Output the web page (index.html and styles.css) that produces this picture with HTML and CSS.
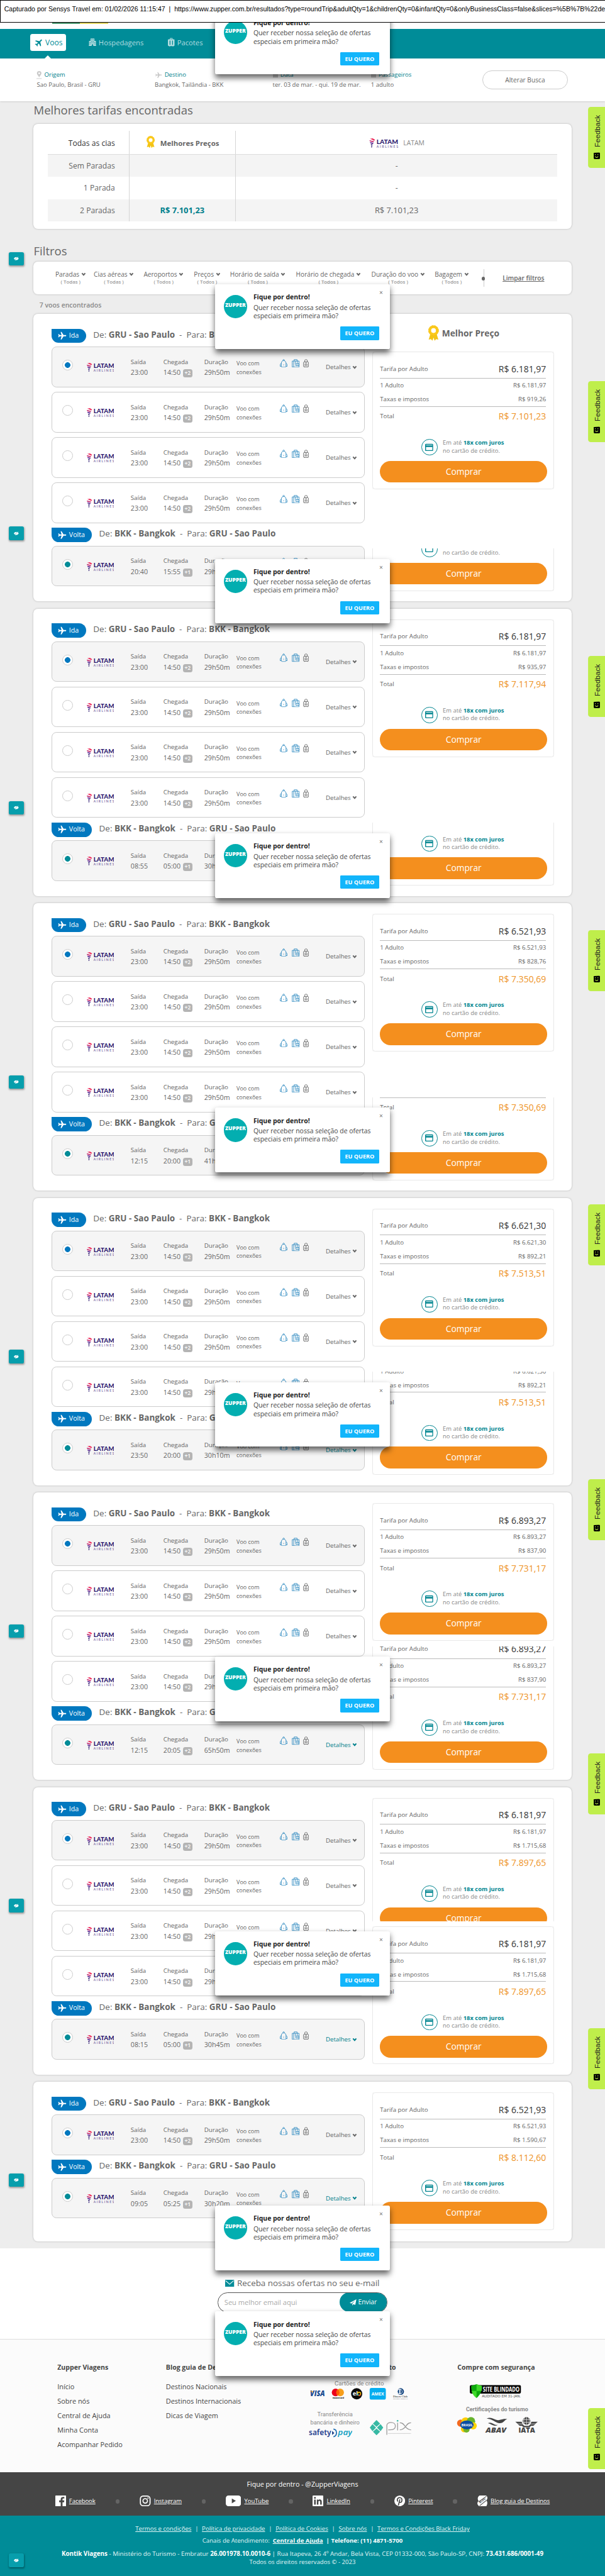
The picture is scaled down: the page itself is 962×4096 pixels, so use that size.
FILE: index.html
```html
<!DOCTYPE html>
<html lang="pt-BR">
  <head>
    <meta charset="utf-8">
    <title>Zupper Viagens - Resultados</title>
    <link rel="stylesheet" href="styles.css">
  </head>
  <body>
    <!-- Icon sprite -->
    <svg class="sprite">
      <symbol id="plane" viewBox="0 0 24 24"><path fill="currentColor" d="M22 10.3h-6L10.4 1.5H7.8l2.6 8.8H5.2L3 7.6H1l1.3 4.4L1 16.4h2l2.2-2.7h5.2l-2.6 8.8h2.6l5.6-8.8h6c2.600 0 2.600-3.400 0-3.400z"/></symbol>
      <symbol id="hotel" viewBox="0 0 20 20"><path fill="currentColor" fill-rule="evenodd" d="M5 0h10v6h4v12h1v2h-8v-5H8v5H0v-2h1V6h4zM7 2v2h2V2zm4 0v2h2V2zM7 6v2h2V6zm4 0v2h2V6zM3 9v2h2V9zm4 1v2h2v-2zm4 0v2h2v-2zm4-1v2h2V9zM3 13v2h2v-2zm12 0v2h2v-2z"/></symbol>
      <symbol id="suitcase" viewBox="0 0 16 20"><path fill="currentColor" fill-rule="evenodd" d="M5 0h6v3h3a2 2 0 0 1 2 2v12a2 2 0 0 1-2 2h-1v1h-2v-1H5v1H3v-1H2a2 2 0 0 1-2-2V5a2 2 0 0 1 2-2h3zm1.500 1.500V3h3V1.500zM4 6v10h2V6zm6 0v10h2V6z"/></symbol>
      <symbol id="pin" viewBox="0 0 12 18"><path fill="currentColor" fill-rule="evenodd" d="M6 0a5 5 0 0 1 5 5c0 3-3 5-5 9-2-4-5-6-5-9a5 5 0 0 1 5-5zm0 3a2 2 0 1 0 0 4 2 2 0 0 0 0-4zM0 16h12v1.500H0z"/></symbol>
      <symbol id="box" viewBox="0 0 12 12"><path fill="currentColor" d="M1 2h2V0h2v2h2V0h2v2h2a1 1 0 0 1 1 1v9H0V3a1 1 0 0 1 1-1z"/></symbol>
      <symbol id="ribbon" viewBox="0 0 24 30"><path fill="#f3c416" d="M6 17L3 27l4-1 3 3 2-6 2 6 3-3 4 1-3-10z"/><circle cx="12" cy="10" r="7" fill="#fff" stroke="#fbc91b" stroke-width="5"/><circle cx="12" cy="10" r="9.300" fill="none" stroke="#f3bc10" stroke-width="1" stroke-dasharray="3 2"/></symbol>
      <symbol id="latam" viewBox="0 0 61 20">
        <path fill="#ee2a5a" d="M1 1l6-1 5 3-2 2-6-3z"/><path fill="#c3226b" d="M0 4l10 2.500-1.500 2L1 6.500z"/><path fill="#5a2a92" d="M1 8l8 1.800-2 2.400-5-1.700z"/><path fill="#2d1a70" d="M3 12.500l4 .8-1.500 2-2.200-.6zM4 16l2 .4-.8 3.200H4z"/>
        <text x="15" y="11.800" class="latam-name" textLength="46" lengthAdjust="spacingAndGlyphs">LATAM</text>
        <text x="15" y="19.600" class="latam-sub" textLength="46">AIRLINES</text>
      </symbol>
      <symbol id="chevron" viewBox="0 0 12 12"><path fill="none" stroke="currentColor" stroke-width="3" d="M2 3.500l4 4.500 4-4.500"/></symbol>
      <symbol id="backpack" viewBox="0 0 18 20"><g fill="none" stroke="currentColor" stroke-width="1.200"><path d="M3.500 17V9.500C3.500 6.500 5.500 3.500 9 3.500s5.500 3 5.500 6V17c0 1.500-.8 2-2 2h-7c-1.200 0-2-.5-2-2zM7 3.500C6.500 0 11.500 0 11 3.500M3.500 10C.5 11 .6 13 .8 17h2.700M14.500 10c3 1 2.900 3 2.700 7h-2.700M8 13.500h2"/></g></symbol>
      <symbol id="handbag" viewBox="0 0 18 20"><g fill="none" stroke="currentColor" stroke-width="1.200"><path d="M1 4.500h16V19H1zM5.500 4.500V1.200h7v3.300M4.500 4.500V19M8.500 4.500V11M13 10V4.500M9.500 11H17v4.500H9.500zM12 13.200h1.500"/></g></symbol>
      <symbol id="checked-bag" viewBox="0 0 14 20"><g fill="none" stroke="currentColor" stroke-width="1.200"><rect x="1" y="6.500" width="12" height="12" rx="2"/><path d="M4 6.500V2.500C4 .5 10 .5 10 2.500v4M4.500 11v5M7 11v5M9.500 11v5M5 9h4M3 18.500V20M11 18.500V20"/></g></symbol>
      <symbol id="card" viewBox="0 0 18 18"><path fill="currentColor" fill-rule="evenodd" d="M2 1h14a2 2 0 0 1 2 2v12a2 2 0 0 1-2 2H2a2 2 0 0 1-2-2V3a2 2 0 0 1 2-2zm0 2v1.500h14V3zm0 5v7h14V8z"/></symbol>
      <symbol id="eye-off" viewBox="0 0 12 10"><path fill="currentColor" d="M0 5c3-5 9-5 12 0-3 5-9 5-12 0z"/><path stroke="#079eac" stroke-width="1" d="M1.500 9.500l8-9.500"/><path stroke="currentColor" stroke-width="1" d="M2.500 10l8-9.500"/></symbol>
      <symbol id="smile" viewBox="0 0 16 16"><path d="M1 1l12-1c2 0 3 1 3 3v10c0 2-1 3-3 3H4c-2 0-3-1-3-3z"/><path fill="none" stroke="#bfee4b" stroke-width="1.600" d="M5 4v2.500M11 4v2.500M4.500 9.500c1 3.500 6 3.500 7 0"/></symbol>
    </svg>

    <div class="page">
      <div class="capture-bar">Capturado por Sensys Travel em: 01/02/2026 11:15:47 &nbsp;|&nbsp; https://www.zupper.com.br/resultados?type=roundTrip&amp;adultQty=1&amp;childrenQty=0&amp;infantQty=0&amp;onlyBusinessClass=false&amp;slices=%5B%7B%22de</div>
      <div class="logo-strip"><span class="logo-line"></span></div>

      <nav class="navbar">
        <a class="tab active"><svg width="19" height="19"><use href="#plane"/></svg>Voos</a>
        <a class="tab hotels"><svg width="17" height="18"><use href="#hotel"/></svg>Hospedagens</a>
        <a class="tab packs"><svg width="15" height="20"><use href="#suitcase"/></svg>Pacotes</a>
      </nav>

      <div class="search">
        <div class="field"><div class="name"><svg width="12" height="18"><use href="#pin"/></svg>Origem</div>Sao Paulo, Brasil - GRU</div>
        <div class="field"><div class="name"><svg width="17" height="15"><use href="#plane"/></svg>Destino</div>Bangkok, Tailândia - BKK</div>
        <div class="field"><div class="name"><svg width="12" height="12"><use href="#box"/></svg>Data</div>ter. 03 de mar. - qui. 19 de mar.</div>
        <div class="field"><div class="name"><svg width="12" height="12"><use href="#box"/></svg>Passageiros</div>1 adulto</div>
        <button class="change">Alterar Busca</button>
      </div>

      <main class="content">
        <h2>Melhores tarifas encontradas</h2>
        <section class="card best">
          <table>
            <tr class="head"><td>Todas as cias</td><td class="bold"><svg width="24" height="28"><use href="#ribbon"/></svg>Melhores Preços</td><td class="cia"><svg width="68" height="21"><use href="#latam"/></svg>LATAM</td></tr>
            <tr class="odd"><td>Sem Paradas</td><td></td><td>-</td></tr>
            <tr><td>1 Parada</td><td></td><td>-</td></tr>
            <tr class="odd"><td>2 Paradas</td><td class="price">R$ 7.101,23</td><td class="value">R$ 7.101,23</td></tr>
          </table>
        </section>

        <h2 class="filters-title">Filtros</h2>
        <section class="card filters" id="filters"></section>
        <p class="found">7 voos encontrados</p>

        <div id="results"></div>
      </main>

      <section class="newsletter">
        <h3><svg width="20" height="16" viewBox="0 0 20 16"><rect width="20" height="16" fill="#008c98"/><path fill="none" stroke="#fff" stroke-width="1.500" d="M1 2l9 8 9-8"/></svg>Receba nossas ofertas no seu e-mail</h3>
        <div class="mail-form"><span class="mail-input">Seu melhor email aqui</span><span class="send"><svg width="15" height="14" viewBox="0 0 15 14"><path fill="#fff" d="M15 0L0 8l4 1.500L12 3 6 10v4l2.500-3 4 1.500z"/></svg>Enviar</span></div>
      </section>

      <footer>
        <div class="footer-cols">
          <div class="col about"><h4>Zupper Viagens</h4><a>Início</a><a>Sobre nós</a><a>Central de Ajuda</a><a>Minha Conta</a><a>Acompanhar Pedido</a></div>
          <div class="col blog"><h4>Blog guia de Destinos</h4><a>Destinos Nacionais</a><a>Destinos Internacionais</a><a>Dicas de Viagem</a></div>
          <div class="col payment">
            <h4>Formas de pagamento</h4>
            <div class="small cards-label">Cartões de crédito</div>
            <svg class="brands" width="220" height="26" viewBox="0 0 220 26">
              <text x="0" y="18" class="visa" textLength="33" lengthAdjust="spacingAndGlyphs">VISA</text><path fill="#f7a823" d="M0 6.500h5l2 4z"/>
              <circle cx="57" cy="10" r="8.500" fill="#eb001b"/><circle cx="67" cy="10" r="8.500" fill="#f79e1b"/><path fill="#ff5f00" d="M62 3a8.500 8.500 0 0 1 0 14 8.500 8.500 0 0 1 0-14z"/><text x="50" y="23.500" class="mc">mastercard</text>
              <circle cx="104" cy="13" r="12.500" fill="#0b0b0b"/><text x="95" y="17" class="elo">el</text><circle cx="109.500" cy="13" r="3.500" fill="none" stroke="#ffcb05" stroke-width="2"/><path fill="none" stroke="#ef4123" stroke-width="2" d="M112.800 14.500a3.500 3.500 0 0 1-4.500 1.800"/><path fill="none" stroke="#00a4e0" stroke-width="2" d="M106 13a3.500 3.500 0 0 0 2 3.200"/>
              <rect x="133" y="0" width="36" height="26" rx="4" fill="#06aef0"/><text x="137" y="17.500" class="amex" textLength="28" lengthAdjust="spacingAndGlyphs">AMEX</text>
              <circle cx="202" cy="8" r="7.500" fill="#1a4a83"/><circle cx="200" cy="8" r="6" fill="#fff"/><path fill="#1a4a83" d="M199 3.500v9a4.600 4.600 0 0 1 0-9zm2.500 0v9a4.600 4.600 0 0 0 0-9z"/><text x="185" y="20.500" class="diners" textLength="32">Diners Club</text><text x="185" y="25" class="diners-sub" textLength="33">INTERNATIONAL</text>
            </svg>
            <div class="transfer">
              <div class="small">Transferência<br>bancária e dinheiro
                <svg width="98" height="22" viewBox="0 0 98 22"><text x="0" y="15" class="safety" textLength="50" lengthAdjust="spacingAndGlyphs">safety</text><path fill="none" stroke="#1f6fb4" stroke-width="2.500" d="M55 2c9 1 9 15 0 17"/><path fill="#1f3f86" d="M52 6l5 5-5 4z"/><text x="65" y="15" class="pay" textLength="32" lengthAdjust="spacingAndGlyphs">pay</text></svg>
              </div>
              <svg width="93" height="34" viewBox="0 0 93 34"><g fill="#37b9a4"><path d="M15 0l8 8-8 7-8-7zM15 34l8-8-8-7-8 7zM6 9l8 8-8 8-6-8zM24 9l-8 8 8 8 6-8z"/><circle cx="62" cy="1.800" r="1.800"/></g><path fill="none" stroke="#999" stroke-width="1.800" d="M38 33V12c0-9 19-9 19 1s-10 9-16 9M62 6v17M67 6c6 0 8 3 11 7s6 9 14 9M92 6c-6 0-8 3-11 7s-6 9-14 9"/><path stroke="#aaa" stroke-dasharray="2 .8" d="M41 30h51"/></svg>
            </div>
          </div>
          <div class="col safe">
            <h4>Compre com segurança</h4>
            <svg class="blindado" width="115" height="31" viewBox="0 0 115 31"><rect y="2" width="114" height="19" rx="3"/><path fill="#0da80d" d="M15 0l12 4c0 12-3 19-12 27C6 23 3 16 3 4z"/><path fill="#5ff83a" d="M15 0v15h12c.5-4 0-8 0-11zM15 31V15H3.500C5 22 9 27 15 31z" opacity=".6"/><text x="29" y="17" class="bl" textLength="82" lengthAdjust="spacingAndGlyphs">SITE BLINDADO</text><text x="27" y="30" class="bl-sub" textLength="87">AUDITADO EM 31-JAN.</text></svg>
            <div class="cert">Certificações do turismo</div>
            <svg class="seals" width="181" height="36" viewBox="0 0 181 36">
              <circle cx="9" cy="14" r="8" fill="#f26a21"/><circle cx="20" cy="10" r="9" fill="#ffcb05"/><circle cx="32" cy="10" r="9.500" fill="#66b32e"/><circle cx="37" cy="20" r="8" fill="#ffd400"/><circle cx="17" cy="27" r="7.500" fill="#ffcb05"/><circle cx="22" cy="28" r="7" fill="#6fb42c"/><ellipse cx="23" cy="18" rx="15" ry="10" fill="#0b4ea2"/><text x="11" y="21" class="br" textLength="25" lengthAdjust="spacingAndGlyphs">BRASIL</text>
              <path fill="#444" d="M67 4c12-6 18 5 28 3 9-2 12-3 18-2-8 3-8 10-18 9S82 5 67 4zM70 14c8-4 13 4 19 4h3c-8 5-14-2-22-4z"/><text x="65" y="35" class="ab it" textLength="46" lengthAdjust="spacingAndGlyphs">ABAV</text>
              <circle cx="156" cy="9" r="8.500" fill="#444"/><path fill="none" stroke="#fbfbfb" d="M156 0v18M148 6h16M148 12h16M152 1c-3 5-3 11 0 16M160 1c3 5 3 11 0 16"/><path fill="#444" d="M131 11h14l2 4h-11zM136 16h11l4 4h-10zM181 11h-14l-2 4h11zM176 16h-11l-4 4h10zM146 20h20l-3 3h-14z"/><text x="138" y="35" class="ab" textLength="37" lengthAdjust="spacingAndGlyphs">IATA</text>
            </svg>
          </div>
        </div>
        <div class="social">
          <p>Fique por dentro - @ZupperViagens</p>
          <div class="networks">
            <a><svg width="24" height="24" viewBox="0 0 24 24"><rect width="24" height="24" rx="1" fill="#fff"/><path fill="#454545" d="M16 24v-9h3.500l.5-4h-4V8.500c0-1.200.5-2 2-2h2V3.200C16 2.500 12 3.500 12 8v3H8.500v4H12v9z"/></svg><u>Facebook</u></a><i></i>
            <a><svg width="25" height="24" viewBox="0 0 24 24" fill="none" stroke="#fff" stroke-width="2.400"><rect x="1.200" y="1.200" width="21.600" height="21.600" rx="6"/><circle cx="12" cy="12" r="5"/><circle cx="18.300" cy="5.700" r=".5"/></svg><u>Instagram</u></a><i></i>
            <a><svg width="34" height="24" viewBox="0 0 34 24"><rect width="34" height="24" rx="6" fill="#fff"/><path fill="#454545" d="M13.500 6.500l9 5.500-9 5.500z"/></svg><u>YouTube</u></a><i></i>
            <a><svg width="24" height="24" viewBox="0 0 24 24"><rect width="24" height="24" rx="1.500" fill="#fff"/><path fill="#454545" d="M3.500 9H7v11.500H3.500zM9.500 9h3.300v1.600c1.700-3 7.700-2.600 7.700 3v6.900H17v-6c0-3.500-4-3.300-4 0v6H9.500z"/><circle cx="5.300" cy="5.300" r="2" fill="#454545"/></svg><u>LinkedIn</u></a><i></i>
            <a><svg width="24" height="24" viewBox="0 0 24 24"><circle cx="12" cy="12" r="12" fill="#fff"/><path fill="none" stroke="#454545" stroke-width="2.300" d="M7.800 13.500C4 7 10 4 13.500 5c5.500 1.500 4 10 0 10.500-2 0-2.500-1-2.500-1M12.500 8.500L9 22"/></svg><u>Pinterest</u></a><i></i>
            <a><svg width="23" height="24" viewBox="0 0 23 24"><path fill="#fff" d="M5 0h14c4 2 5 6 1 11 3 3 3 8 0 13H4c-5-4-5-8-1-12C0 9 0 3 5 0z"/><path stroke="#454545" stroke-width="1.500" d="M20 2L3 14M20 11L5 23"/><text class="tag" transform="translate(6 18) rotate(-38)">BLOG</text></svg><u>Blog guia de Destinos</u></a>
          </div>
        </div>
        <div class="legal">
          <p class="links"><u>Termos e condições</u>|<u>Política de privacidade</u>|<u>Política de Cookies</u>|<u>Sobre nós</u>|<u>Termos e Condições Black Friday</u></p>
          <p class="help">Canais de Atendimento: &nbsp;<b><u>Central de Ajuda</u></b> &nbsp;<b>| Telefone: (11) 4871-5700</b></p>
          <p class="address"><b>Kontik Viagens</b> - Ministério do Turismo - Embratur <b>26.001978.10.0010-6</b> | Rua Itapeva, 26 4º Andar, Bela Vista, CEP 01332-000, São Paulo-SP, CNPJ: <b>73.431.686/0001-49</b></p>
          <p class="rights">Todos os direitos reservados © - 2023</p>
        </div>
      </footer>

      <!-- Floating widgets: one set for every screen of the page -->
      <div id="widgets"></div>
    </div>
    <script src="script.js"></script>
  </body>
</html>
```
FILE: styles.css
```css
html {
  overflow: hidden;
}

body {
  margin: 0;
  height: 4096px;
  overflow: hidden;
  font-family: "Open Sans", "Noto Sans", sans-serif;
  font-size: 13.6px;
  color: #666;
  background: #fff;
}

h2, h3, h4, p {
  margin: 0;
  font-weight: normal;
}

svg {
  flex: none;
}

.sprite {
  display: none;
}

.page {
  zoom: 0.7131;
  position: relative;
  width: 1349px;
  height: 5744px;
  overflow: hidden;
  font-size: 13.6px;
}

/* Header */
.capture-bar {
  position: relative;
  z-index: 5;
  box-sizing: border-box;
  height: 51px;
  padding: 8px 0 0 8px;
  border: 2px solid #000;
  border-right: 0;
  background: #fff;
  color: #000;
  font: 14.8px/20px "Liberation Sans", Arial, sans-serif;
  white-space: nowrap;
  overflow: hidden;
}

.logo-strip {
  height: 14px;
  padding-left: 117px;
}

.logo-line {
  display: block;
  width: 124px;
  height: 2px;
  background: linear-gradient(90deg, #4d9a72 50%, #dfd35c 50%);
}

.navbar {
  display: flex;
  align-items: flex-start;
  box-sizing: border-box;
  height: 65px;
  padding: 11px 0 0 68px;
  background: #008c98;
}

.tab {
  display: flex;
  align-items: center;
  gap: 5px;
  height: 36px;
  color: #b5dde0;
  font-size: 15.8px;
}

.tab.active {
  position: relative;
  box-sizing: border-box;
  width: 79px;
  height: 38px;
  padding-left: 9px;
  border-radius: 5px;
  background: #fff;
  color: #008c98;
  font-size: 17px;
}

.tab.active svg {
  transform: rotate(-45deg);
}

.tab.active::after {
  content: "";
  position: absolute;
  left: 31px;
  bottom: -16px;
  border: 8px solid transparent;
  border-top: 0;
  border-bottom-color: #fff;
}

.tab.hotels {
  width: 120px;
  margin-left: 51px;
}

.tab.packs { margin-left: 57px; }

.search {
  display: flex;
  box-sizing: border-box;
  height: 96px;
  padding: 25px 0 0 82px;
  box-shadow: 0 1px 4px rgba(0, 0, 0, 0.2);
  position: relative;
}

.field {
  width: 263px;
  line-height: 20px;
  font-size: 13.4px;
  white-space: nowrap;
}

.field:nth-child(3) { width: 219px; }
.field:nth-child(4) { width: 248px; }

.field .name {
  display: flex;
  align-items: center;
  gap: 5px;
  height: 25px;
  color: #00808c;
}

.field .name svg {
  color: #c9c9c9;
}

.change {
  width: 192px;
  height: 42px;
  margin-top: 2px;
  border: 1px solid #ccc;
  border-radius: 21px;
  background: #fff;
  color: #666;
  font: 14.3px "Open Sans", sans-serif;
}

/* Best fares */
.content {
  box-sizing: border-box;
  height: 4788px;
  padding: 0 74px 0 75px;
  background: #ededed;
}

h2 {
  height: 50px;
  line-height: 40px;
  font-size: 26px;
}

.card {
  box-sizing: border-box;
  border-radius: 10px;
  background: #fff;
  box-shadow: 0 0 4px rgba(0, 0, 0, 0.25);
}

.best {
  height: 234px;
  padding: 16px 32px;
}

table {
  width: 1136px;
  border-collapse: collapse;
  table-layout: fixed;
  font-size: 17px;
}

td {
  box-sizing: border-box;
  height: 50px;
  padding: 0;
  line-height: 24px;
  text-align: center;
}

td:first-child {
  width: 181px;
  padding-right: 31px;
  text-align: right;
}

td:nth-child(2) {
  width: 237px;
  border-left: 1px solid #d5d5d5;
  border-right: 1px solid #d5d5d5;
}

td svg {
  margin-right: 9px;
  vertical-align: -6px;
}

.head td {
  height: 52px;
  border-bottom: 2px solid #ddd;
}

.head td:first-child {
  padding-top: 4px;
  color: #333;
}

.odd { background: #f4f4f4; }
td.bold { font-weight: bold; font-size: 16px; }
td.cia { padding-top: 3px; font-size: 14.6px; color: #888; }
td.price { font-weight: bold; font-size: 18px; color: #00808c; }
td.value { font-size: 18px; }

.latam-name {
  font: 900 13.500px Lato, sans-serif;
  fill: #2d1a70;
}

.latam-sub {
  font: 600 7px Lato, sans-serif;
  fill: #6d5e9c;
}

/* Filters */
.filters-title {
  height: 44px;
  margin-top: 30px;
}

.filters {
  display: flex;
  position: relative;
  height: 72px;
  padding: 18px 0 0 47px;
}

.filter {
  line-height: 20px;
  font-size: 14.2px;
  white-space: nowrap;
  text-align: center;
  margin-right: 14px;
}

.filter small {
  display: block;
  line-height: 16px;
  font-size: 11px;
  font-weight: 600;
  color: #999;
}

.slider {
  width: 1px;
  height: 40px;
  margin: -2px 0 0 15px;
  background: #ccc;
}

.slider::before {
  content: "";
  display: block;
  height: 17px;
}

.slider::after {
  content: "";
  display: block;
  width: 8px;
  height: 8px;
  margin-left: -4px;
  border-radius: 4px;
  background: #666;
}

.clear {
  margin: 8px 0 0 42px;
  font-size: 14.300px;
  font-weight: 600;
  text-decoration: underline;
}

.found {
  height: 44px;
  padding-left: 13px;
  line-height: 49px;
  font-size: 14.700px;
  font-weight: 600;
  color: #888;
}

/* Results */
.result {
  display: flex;
  gap: 16px;
  height: 641px;
  margin-bottom: 16px;
  padding: 0 40px;
}

.result.short {
  height: 356px;
}

.flights {
  width: 699px;
  padding-top: 33px;
}

.route {
  display: flex;
  height: 32px;
  margin-bottom: 8px;
  font-size: 18.900px;
  line-height: 28px;
  white-space: pre;
}

.badge {
  display: flex;
  align-items: center;
  gap: 6px;
  box-sizing: border-box;
  width: 77px;
  height: 32px;
  margin-right: 16px;
  padding-left: 14px;
  border-radius: 0 16px 16px 16px;
  background: #0178bf;
  color: #fff;
  font-size: 15px;
}

.badge.back { width: 90px; }

.flight {
  display: grid;
  grid-template-columns: 77px 98px 73px 91px 72px 97px 102px 1fr;
  box-sizing: border-box;
  height: 90.5px;
  margin-bottom: 10.5px;
  border: 1px solid #ccc;
  border-radius: 11px;
  background: #fff;
  line-height: 23px;
  font-size: 13.600px;
  white-space: nowrap;
}

.flight.selected { background: #f5f5f5; }

.radio {
  box-sizing: border-box;
  width: 24px;
  height: 24px;
  margin: 28px 0 0 22px;
  border: 1px solid #ccc;
  border-radius: 50%;
  background: #fff;
}

.selected .radio {
  background: radial-gradient(circle, #0178bf 5.800px, #fff 6.500px);
}

.return .radio {
  background: radial-gradient(circle, #008c98 5.800px, #fff 6.500px);
}

.flight .latam { margin-top: 35px; }
.time { padding-top: 22px; }
.time b { font-weight: normal; font-size: 15px; }

.time i {
  display: inline-block;
  height: 18px;
  padding: 0 4px;
  margin-left: 5px;
  border-radius: 5px;
  background: #b4b4b4;
  color: #fff;
  font: 600 12px/18px "Open Sans", sans-serif;
}

.stops {
  padding-top: 27px;
  line-height: 19px;
  font-size: 12.600px;
}

.bags {
  display: flex;
  gap: 9px;
  margin-top: 26px;
  color: #1a7fba;
}

.bags svg:last-child { color: #555; }

.details { padding-top: 34px; }
.return .details { color: #00808c; }

/* Price column */
.fares {
  display: flex;
  flex-direction: column;
  justify-content: space-between;
  width: 405px;
  padding: 24px 0 23px;
}

.medal {
  display: flex;
  justify-content: center;
  align-items: center;
  gap: 5px;
  height: 38px;
  margin-bottom: 22px;
  font-size: 19.300px;
  font-weight: bold;
}

/* Cuts a repeated fare box at the edge of a screen */
.cut {
  display: flex;
  align-items: flex-end;
  overflow: hidden;
}

.cut.top { align-items: flex-start; }

.fare {
  box-sizing: border-box;
  width: 405px;
  height: 307px;
  flex: none;
  padding: 16px 16px 0;
  border: 1px solid #e8e8e8;
  border-radius: 6px;
  box-shadow: 0 0 3px rgba(0, 0, 0, 0.12);
}

.line {
  display: flex;
  justify-content: space-between;
  align-items: center;
  height: 31px;
}

.line.adult {
  height: 41px;
  border-bottom: 1px solid #bbb;
}

.line.tax { border-bottom: 1px solid #bbb; height: 31px; }
.line.total { height: 42px; }

.line strong {
  color: #333;
  font-size: 19.600px;
  font-weight: normal;
}

.line.total strong { color: #ee9326; }

.installments {
  display: flex;
  gap: 12px;
  margin: 30px 0 13px 92px;
  line-height: 17.500px;
  font-size: 13.200px;
  color: #888;
}

.installments b { color: #008590; }

.installments span {
  display: flex;
  align-items: center;
  justify-content: center;
  box-sizing: border-box;
  width: 36px;
  height: 36px;
  border: 1px solid #008590;
  border-radius: 50%;
  color: #008590;
}

.buy {
  width: 373px;
  height: 48px;
  border-radius: 24px;
  background: #f48f1e;
  color: #fff;
  font-size: 19.300px;
  line-height: 48px;
  text-align: center;
}

/* Newsletter */
.newsletter {
  height: 201px;
  border-bottom: 2px solid #ddd;
  background: #fff;
}

h3 {
  display: flex;
  justify-content: center;
  align-items: center;
  gap: 6px;
  height: 34px;
  padding-top: 60px;
  font-size: 18.800px;
}

.mail-form {
  display: flex;
  justify-content: flex-end;
  position: relative;
  box-sizing: border-box;
  width: 379px;
  height: 45px;
  margin: 3px auto 0;
  border: 1px solid #555;
  border-radius: 22px;
  line-height: 43px;
  overflow: hidden;
}

.mail-input {
  flex: 1;
  padding-left: 14px;
  color: #aaa;
  font-size: 15.500px;
}

.send {
  display: flex;
  align-items: center;
  gap: 4px;
  width: 84px;
  margin: -1px;
  padding-left: 22px;
  border-radius: 22px;
  background: #008c98;
  color: #fff;
  font-size: 14.500px;
}

/* Footer */
.footer-cols {
  display: flex;
  box-sizing: border-box;
  height: 296px;
  padding: 47px 0 0 128px;
  background: #fbfbfb;
}

.col {
  font-size: 15.300px;
  line-height: 32.200px;
  color: #444;
}

.col a { display: block; }

h4 {
  margin-bottom: 11px;
  font-size: 14.800px;
  font-weight: bold;
  line-height: 32px;
}

.about { width: 242px; }
.blog { width: 317px; }

.payment {
  width: 333px;
  text-align: center;
}

.payment h4 {
  width: 196px;
  margin: 0;
  text-align: right;
}

.small {
  color: #888;
  font: 13.500px/18px Roboto, sans-serif;
}

.cards-label {
  margin: 11px 0 1px;
  width: 228px;
}

.brands {
  display: block;
  margin-left: 5px;
}

.transfer {
  display: flex;
  gap: 18px;
  margin-top: 24px;
}

.transfer .small {
  width: 120px;
  font-size: 13px;
  white-space: nowrap;
}

.transfer .small svg {
  display: block;
  margin: 3px 0 0 1px;
}

.transfer > svg {
  margin-top: 21px;
}

.visa { font: italic 900 17px "Open Sans", sans-serif; fill: #16478f; }
.mc { font: bold 4.500px "Open Sans", sans-serif; }
.elo { font: bold 13px "Open Sans", sans-serif; fill: #fff; }
.amex { font: bold 10px "Open Sans", sans-serif; fill: #fff; }
.diners { font: 6.500px "Liberation Serif", serif; }
.diners-sub { font: 4px "Liberation Serif", serif; }
.safety { font: 600 18px "Noto Sans", sans-serif; fill: #26418f; }
.pay { font: italic 600 18px "Noto Sans", sans-serif; fill: #1aa3c4; }
.bl { font: bold 14px "Open Sans", sans-serif; fill: #fff; }
.bl-sub { font: 8px "DejaVu Sans", sans-serif; fill: #555; }
.br { font: bold 7px "Open Sans", sans-serif; fill: #fff; }
.ab { font: 900 15px "Open Sans", sans-serif; fill: #444; }
.ab.it { font-style: italic; }
.tag { font: bold 6px "Open Sans", sans-serif; fill: #454545; }

.safe h4 { margin: 0; }

.blindado {
  display: block;
  margin: 21px 0 0 28px;
}

.cert {
  margin: 16px 0 8px 19px;
  color: #888;
  font: bold 12.500px/18px Roboto, sans-serif;
}

.seals {
  display: block;
  margin-left: -2px;
}

.social {
  box-sizing: border-box;
  height: 97px;
  padding-top: 16px;
  background: #454545;
  color: #fff;
  text-align: center;
}

.social p {
  line-height: 24px;
  font-size: 15px;
}

.networks {
  display: flex;
  justify-content: space-between;
  margin: 12px 123px 0;
  height: 24px;
}

.networks a {
  display: flex;
  align-items: center;
  gap: 7px;
  font-size: 13.400px;
  letter-spacing: -0.1px;
}

.networks i {
  width: 9px;
  height: 9px;
  margin-top: 9px;
  border-radius: 50%;
  background: #646464;
}

.legal {
  height: 134px;
  background: #008c98;
  color: #e4f6f7;
  font-size: 13.500px;
  text-align: center;
  white-space: nowrap;
}

.legal b { color: #fff; }

.links {
  display: flex;
  justify-content: center;
  gap: 8px;
  padding-top: 20px;
  line-height: 20px;
}

.help { line-height: 20px; padding-top: 7px; }
.address { line-height: 20px; padding-top: 8px; font-size: 13.800px; }
.rights { line-height: 18px; }

/* Floating widgets */
.popup {
  position: absolute;
  left: 480px;
  z-index: 3;
  display: flex;
  box-sizing: border-box;
  width: 389px;
  height: 144px;
  padding: 20px 0 20px 19px;
  border-radius: 4px;
  background: #fff;
  box-shadow: 0 8px 14px rgba(0, 0, 0, 0.6);
  color: #444;
  font-size: 14.600px;
  line-height: 18.500px;
  white-space: nowrap;
}

.popup .round {
  width: 52px;
  height: 52px;
  margin: 4px 14px 0 0;
  border-radius: 50%;
  background: #03aeb0;
  color: #fff;
  font: 900 12px/46px "Open Sans", sans-serif;
  text-align: center;
}

.popup b {
  display: block;
  height: 23px;
  color: #222;
}

.popup .close {
  position: absolute;
  top: 10px;
  right: 15px;
  color: #777;
}

.popup .want {
  position: absolute;
  right: 24px;
  bottom: 20px;
  width: 86px;
  height: 30px;
  border-radius: 2px;
  background: #12b5fb;
  color: #fff;
  font-size: 12.800px;
  font-weight: bold;
  line-height: 31px;
  text-align: center;
}

/* turned upside down so that the label reads from bottom to top */
.feedback {
  position: absolute;
  right: 0;
  z-index: 2;
  display: flex;
  align-items: center;
  box-sizing: border-box;
  gap: 11px;
  width: 38px;
  height: 136px;
  padding: 20px 2px 0 0;
  border-radius: 0 6px 6px 0;
  background: #bfee4b;
  color: #222;
  font: 16.300px "Liberation Sans", Arial, sans-serif;
  writing-mode: vertical-rl;
  transform: rotate(180deg);
}

.feedback svg {
  transform: rotate(180deg);
}

.a11y {
  position: absolute;
  left: 20px;
  z-index: 2;
  display: flex;
  align-items: center;
  justify-content: center;
  width: 34px;
  height: 30px;
  border-radius: 4px;
  background: #079eac;
  color: #fff;
  box-shadow: 1px 2px 4px rgba(0, 0, 0, 0.35);
}
```
FILE: script.js
```js
const icon = (id, w, h, cls = "") =>
  `<svg class="${cls}" width="${w}" height="${h}"><use href="#${id}"/></svg>`;

// Filters: label, current value, width
const filters = [
  ["Paradas", "Todas", 71], ["Cias aéreas", "Todas", 94], ["Aeroportos", "Todos", 100],
  ["Preços", "Todos", 66], ["Horário de saída", "Todos", 132], ["Horário de chegada", "Todos", 155],
  ["Duração do voo", "Todos", 128], ["Bagagem", "Todos", 83]
];

document.getElementById("filters").innerHTML = filters.map(([label, value, width]) =>
  `<div class="filter" style="width:${width}px">${label} ${icon("chevron", 11, 11)}<small>( ${value} )</small></div>`
).join("") + `<div class="slider"></div><a class="clear">Limpar filtros</a>`;

const FARE_HEIGHT = 307;

// back: departure, arrival, extra days, duration
// head / tail: visible height of the first and the repeated fare box
const results = [
  { adult: "6.181,97", tax: "919,26", total: "7.101,23", back: ["20:40", "15:55", 1, "29h15m"], tail: 95, best: true },
  { adult: "6.181,97", tax: "935,97", total: "7.117,94", back: ["08:55", "05:00", 1, "30h5m"], tail: 140 },
  { adult: "6.521,93", tax: "828,76", total: "7.350,69", back: ["12:15", "20:00", 1, "41h45m"], tail: 185 },
  { adult: "6.621,30", tax: "892,21", total: "7.513,51", back: ["23:50", "20:00", 1, "30h10m"], tail: 230 },
  { adult: "6.893,27", tax: "837,90", total: "7.731,17", back: ["12:15", "20:05", 2, "65h50m"], tail: 275 },
  { adult: "6.181,97", tax: "1.715,68", total: "7.897,65", back: ["08:15", "05:00", 1, "30h45m"], head: 275, tail: 307 },
  { adult: "6.521,93", tax: "1.590,67", total: "8.112,60", back: ["09:05", "05:25", 1, "30h20m"], short: true }
];

function flight([from, to, days, duration], cls) {
  return `<div class="flight ${cls}">
    <div class="radio"></div>
    ${icon("latam", 61, 20, "latam")}
    <div class="time">Saída<br><b>${from}</b></div>
    <div class="time">Chegada<br><b>${to}</b><i>+${days}</i></div>
    <div class="time">Duração<br><b>${duration}</b></div>
    <div class="stops">Voo com<br>conexões</div>
    <div class="bags">${icon("backpack", 17, 19)}${icon("handbag", 17, 19)}${icon("checked-bag", 13, 19)}</div>
    <div class="details">Detalhes ${icon("chevron", 11, 11)}</div>
  </div>`;
}

function fare(r) {
  return `<div class="fare">
    <div class="line adult">Tarifa por Adulto<strong>R$ ${r.adult}</strong></div>
    <div class="line">1 Adulto<span>R$ ${r.adult}</span></div>
    <div class="line tax">Taxas e impostos<span>R$ ${r.tax}</span></div>
    <div class="line total">Total<strong>R$ ${r.total}</strong></div>
    <div class="installments"><span>${icon("card", 18, 18)}</span><div>Em até <b>18x com juros</b><br>no cartão de crédito.</div></div>
    <div class="buy">Comprar</div>
  </div>`;
}

const out = ["23:00", "14:50", 2, "29h50m"];

document.getElementById("results").innerHTML = results.map(r => `
  <section class="card result ${r.short ? "short" : ""}">
    <div class="flights">
      <div class="route"><span class="badge">${icon("plane", 19, 19)}Ida</span>De: <b>GRU - Sao Paulo</b>  -  Para: <b>BKK - Bangkok</b></div>
      ${flight(out, "selected")}
      ${r.short ? "" : flight(out, "").repeat(3)}
      <div class="route"><span class="badge back">${icon("plane", 19, 19)}Volta</span>De: <b>BKK - Bangkok</b>  -  Para: <b>GRU - Sao Paulo</b></div>
      ${flight(r.back, "selected return")}
    </div>
    <div class="fares">
      <div>
        ${r.best ? `<div class="medal">${icon("ribbon", 29, 36)}Melhor Preço</div>` : ""}
        <div class="cut top" style="height:${r.head || FARE_HEIGHT}px">${fare(r)}</div>
      </div>
      ${r.tail ? `<div class="cut" style="height:${r.tail}px">${fare(r)}</div>` : ""}
    </div>
  </section>`).join("");

// Widgets repeat on every screen
const SCREEN = 612;
const LAST = 5132;
const popup = top => `<div class="popup" style="top:${top}px"><div class="round">ZUPPER</div>
  <div><b>Fique por dentro!</b>Quer receber nossa seleção de ofertas<br>especiais em primeira mão?</div>
  <span class="close">×</span><span class="want">EU QUERO</span></div>`;

let widgets = "";
for (let i = 0; i < 10; i++) {
  const y = i < 9 ? i * SCREEN : LAST;
  widgets += popup(y + 22);
  if (i === 8) continue;
  widgets += `<div class="feedback" style="top:${y + 238}px">${icon("smile", 15, 15)}Feedback</div>`;
  widgets += `<div class="a11y" style="top:${y + 562}px">${icon("eye-off", 11, 9)}</div>`;
}
document.getElementById("widgets").innerHTML = widgets;
```
